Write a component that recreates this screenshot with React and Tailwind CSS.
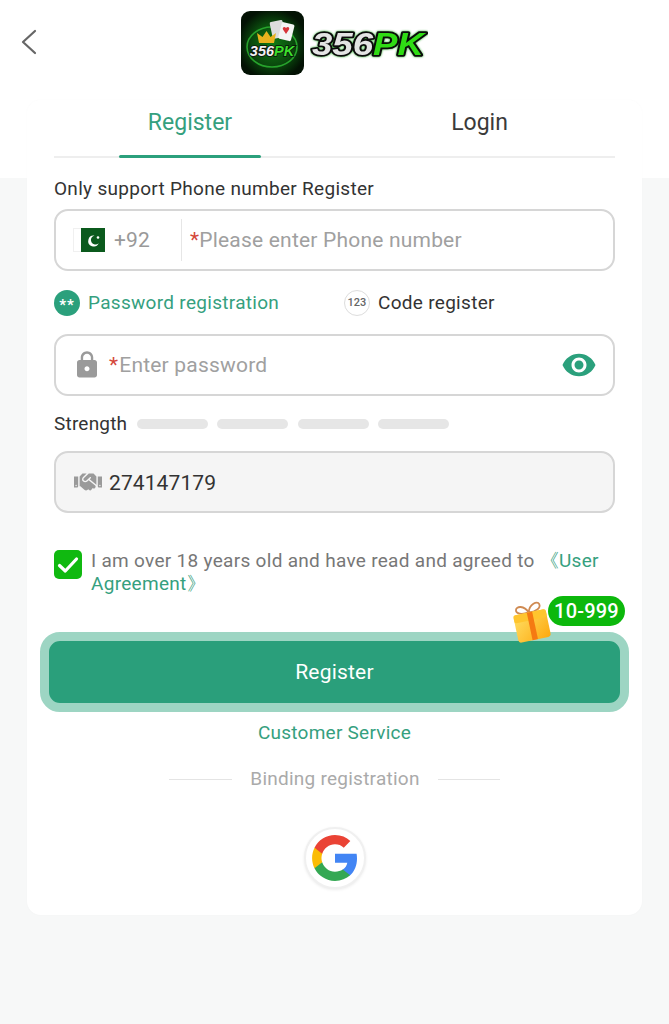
import React from "react";
import { MdLock, MdVisibility } from "react-icons/md";
import { FaHandshake } from "react-icons/fa";

function Logo() {
  return (
    <div className="flex items-center gap-[6px]">
      <svg width="63" height="64" viewBox="0 0 63 64" className="shrink-0">
        <defs>
          <radialGradient id="lg" cx="50%" cy="52%" r="55%">
            <stop offset="0%" stopColor="#0f7a14" />
            <stop offset="60%" stopColor="#0a4a0d" />
            <stop offset="100%" stopColor="#031204" />
          </radialGradient>
        </defs>
        <rect x="0" y="0" width="63" height="64" rx="9" fill="url(#lg)" />
        <ellipse cx="31" cy="36" rx="25" ry="20" fill="none" stroke="#27a32c" strokeWidth="1.600" />
        <rect x="30" y="10" width="13" height="17" rx="1.500" fill="#dcdcdc" transform="rotate(-12 36 18)" />
        <rect x="39" y="12" width="13" height="17" rx="1.500" fill="#f4f4f4" transform="rotate(14 45 20)" />
        <path d="M45 17c1.500-2 4-1 3 1.500L45 23l-3-4.500c-1-2 1.500-3.500 3-1.500z" fill="#d8353a" />
        <path d="M18 32l-2-10 5.500 4 4-6 4 6 5.500-4-2 10z" fill="#e8b21e" />
        <text
          x="31"
          y="45"
          textAnchor="middle"
          fontFamily="'Liberation Sans', sans-serif"
          fontSize="14.500"
          fontWeight="700"
          fontStyle="italic"
          fill="#f2f2f2"
          stroke="#0c0c0c"
          strokeWidth="1.600"
          style={{ paintOrder: "stroke" }}
        >
          356<tspan fill="#3ce02c">PK</tspan>
        </text>
      </svg>
      <svg width="118" height="34" viewBox="0 0 118 34" className="shrink-0">
        <text
          x="2"
          y="29"
          textLength="112"
          lengthAdjust="spacingAndGlyphs"
          fontFamily="'Liberation Sans', sans-serif"
          fontSize="32"
          fontWeight="700"
          fontStyle="italic"
          fill="#e4e4e4"
          stroke="#0b0b0b"
          strokeWidth="3.600"
          strokeLinejoin="round"
          style={{ paintOrder: "stroke", filter: "drop-shadow(0 0 1px #23a523)" }}
        >
          356<tspan fill="#2fdc14">PK</tspan>
        </text>
      </svg>
    </div>
  );
}

function Flag() {
  return (
    <svg width="32" height="24" viewBox="0 0 32 24" className="shrink-0">
      <rect x="0.500" y="0.500" width="8" height="23" fill="#ffffff" stroke="#f0f0f0" />
      <rect x="8" y="0" width="24" height="24" fill="#0b5a1d" />
      <path d="M21.500 7.500a5.500 5.500 0 1 0 4.200 7.800 4.600 4.600 0 1 1-4.200-7.800z" fill="#fff" />
      <circle cx="25" cy="9.500" r="1.300" fill="#fff" />
    </svg>
  );
}

function Gift() {
  return (
    <svg width="44" height="46" viewBox="0 0 44 46">
      <defs>
        <linearGradient id="gf" x1="0" y1="0" x2="1" y2="1">
          <stop offset="0%" stopColor="#ffe066" />
          <stop offset="100%" stopColor="#fda90f" />
        </linearGradient>
      </defs>
      <g transform="rotate(-12 22 25)">
        <path d="M21 14c-3-8-11-9-12-5s5 6 12 5zM21 14c2-8 11-10 12-6s-5 7-12 6z" fill="none" stroke="#cf8a52" strokeWidth="1.800" />
        <rect x="5" y="14" width="33" height="28" rx="3" fill="url(#gf)" />
        <rect x="5" y="14" width="33" height="8" rx="2" fill="#ffc52e" />
        <rect x="19" y="14" width="5.500" height="28" fill="#f57a12" />
      </g>
    </svg>
  );
}

function GoogleG() {
  return (
    <svg width="50" height="50" viewBox="0 0 48 48">
      <path fill="#4285F4" d="M45.120 24.500c0-1.560-.14-3.060-.4-4.500H24v8.510h11.840c-.51 2.750-2.060 5.080-4.390 6.640v5.520h7.110c4.160-3.830 6.560-9.470 6.560-16.170z" />
      <path fill="#34A853" d="M24 46c5.940 0 10.920-1.970 14.560-5.330l-7.110-5.520c-1.970 1.320-4.490 2.100-7.450 2.100-5.730 0-10.580-3.870-12.310-9.070H4.340v5.700C7.960 41.070 15.400 46 24 46z" />
      <path fill="#FBBC05" d="M11.690 28.180C11.250 26.860 11 25.450 11 24s.25-2.860.69-4.180v-5.700H4.340C2.850 17.090 2 20.450 2 24c0 3.550.85 6.910 2.340 9.880l7.350-5.700z" />
      <path fill="#EA4335" d="M24 10.750c3.230 0 6.130 1.110 8.410 3.290l6.310-6.310C34.910 4.180 29.930 2 24 2 15.400 2 7.960 6.930 4.340 14.120l7.350 5.700c1.730-5.200 6.580-9.070 12.310-9.070z" />
    </svg>
  );
}

export default function App() {
  return (
    <div
      className="relative h-[1024px] w-full overflow-hidden bg-[linear-gradient(#ffffff_178px,#f7f8f8_178px)] text-[#333333]"
      style={{ fontFamily: "Roboto, sans-serif" }}
    >
      <header className="relative flex h-[100px] items-start justify-center pt-[11px]">
        <svg width="18" height="26" viewBox="0 0 18 26" fill="none" className="absolute left-[20px] top-[29px]">
          <path d="M15 2L3 13l12 11" stroke="#666666" strokeWidth="2.200" strokeLinecap="round" strokeLinejoin="round" />
        </svg>
        <Logo />
      </header>

      <main className="mx-[27px] h-[815px] rounded-[14px] bg-white px-[27px] shadow-[0_0_3px_rgba(0,0,0,0.02)]">
        <div className="relative flex h-[58px] border-b-2 border-[#eeeeee] text-[23px]">
          <div className="flex w-[272px] justify-center pt-[6px] text-[#35a07e]">Register</div>
          <div className="flex flex-1 justify-center pl-[18px] pt-[6px] text-[#3a3a3a]">Login</div>
          <div className="absolute bottom-[-2px] left-[65px] h-[3.500px] w-[142px] rounded-full bg-[#2ba07c]" />
        </div>

        <p className="mt-[19px] text-[19px] leading-[24px] tracking-[0.3px]">Only support Phone number Register</p>

        <div className="mt-[8px] flex h-[62px] items-center rounded-[14px] border-2 border-[#d6d6d6] pl-[17px] text-[21px] tracking-[0.2px]">
          <Flag />
          <span className="ml-[9px] w-[67px] pt-[1px] text-[#999999]">+92</span>
          <span className="h-[42px] w-px bg-[#e6e6e6]" />
          <span className="ml-[8px] pt-[1px] text-[#d4483b]">*</span>
          <span className="pt-[1px] text-[#a0a0a0]">Please enter Phone number</span>
        </div>

        <div className="mt-[19px] flex h-[26px] items-center text-[19px] tracking-[0.3px]">
          <span className="flex h-[26px] w-[26px] items-center justify-center rounded-full bg-[#2ba07c] pt-[4px] text-[15px] font-bold leading-none tracking-[1px] text-white">**</span>
          <span className="ml-[8px] w-[256px] text-[#35a07e]">Password registration</span>
          <span className="flex h-[26px] w-[26px] items-center justify-center rounded-full border border-[#dddddd] text-[11px] font-medium tracking-normal text-[#666666]">123</span>
          <span className="ml-[8px] text-[#333333]">Code register</span>
        </div>

        <div className="mt-[18px] flex h-[62px] items-center rounded-[14px] border-2 border-[#d6d6d6] pl-[17px] pr-[16px] text-[21px] tracking-[0.2px]">
          <MdLock size={30} className="ml-[-1px] shrink-0 text-[#9a9a9a]" />
          <span className="ml-[7px] pt-[1px] text-[#d4483b]">*</span>
          <span className="flex-1 pt-[1px] pl-[1px] text-[#a0a0a0]">Enter password</span>
          <MdVisibility size={36} className="text-[#2ba07c]" />
        </div>

        <div className="mt-[14px] flex h-[28px] items-center text-[19px] tracking-[0.2px]">
          <span className="w-[83px]">Strength</span>
          <div className="flex gap-[9.250px]">
            <span className="h-[10px] w-[71px] rounded-full bg-[#e6e6e6]" />
            <span className="h-[10px] w-[71px] rounded-full bg-[#e6e6e6]" />
            <span className="h-[10px] w-[71px] rounded-full bg-[#e6e6e6]" />
            <span className="h-[10px] w-[71px] rounded-full bg-[#e6e6e6]" />
          </div>
        </div>

        <div className="mt-[13px] flex h-[62px] items-center rounded-[14px] border-2 border-[#d6d6d6] bg-[#f5f5f5] pl-[17px] text-[21px] tracking-[0.1px]">
          <FaHandshake size={28} className="ml-[1px] shrink-0 text-[#9a9a9a]" />
          <span className="ml-[7px] pt-[3px] text-[#333333]">274147179</span>
        </div>

        <div className="mt-[37px] flex">
          <span className="flex h-[29px] w-[28px] shrink-0 items-center justify-center rounded-[5px] bg-[#10b910]">
            <svg width="22" height="18" viewBox="0 0 22 18" fill="none">
              <path d="M2.500 9.500l5.800 5.500L19.500 3" stroke="#ffffff" strokeWidth="3.200" strokeLinecap="round" strokeLinejoin="round" />
            </svg>
          </span>
          <p className="ml-[9px] mt-[-1px] mb-[1px] text-[19px] leading-[23px] tracking-[0.3px] text-[#777777]">
            I am over 18 years old and have read and agreed to <span className="text-[#35a07e]">《User Agreement》</span>
          </p>
        </div>

        <div className="relative mx-[-14px] mt-[36px] flex h-[80px] items-center justify-center rounded-[20px] border-[9px] border-[#9dd5c3] bg-[#2a9f7b] pt-[2px] text-[21px] tracking-[0.2px] text-white">
          Register
          <div className="absolute right-[-5px] top-[-45px] flex h-[30px] w-[77px] items-center justify-center rounded-full bg-[#0cb80c] text-[20px] font-medium text-white">10-999</div>
          <div className="absolute right-[66px] top-[-43px]"><Gift /></div>
        </div>

        <p className="mt-[9px] text-center text-[19px] leading-[24px] tracking-[0.25px] text-[#35a07e]">Customer Service</p>

        <div className="mt-[22px] flex items-center justify-center text-[19px] leading-[24px] tracking-[0.25px] text-[#aaaaaa]">
          <span className="h-px w-[63px] bg-[#e4e4e4]" />
          <span className="mx-[18px]">Binding registration</span>
          <span className="h-px w-[62px] bg-[#e4e4e4]" />
        </div>

        <div className="mt-[36px] flex justify-center">
          <span className="flex h-[62px] w-[62px] items-center justify-center rounded-full border-2 border-[#f0f0f0] bg-white shadow-[0_1px_3px_rgba(0,0,0,0.08)]">
            <GoogleG />
          </span>
        </div>
      </main>
    </div>
  );
}
